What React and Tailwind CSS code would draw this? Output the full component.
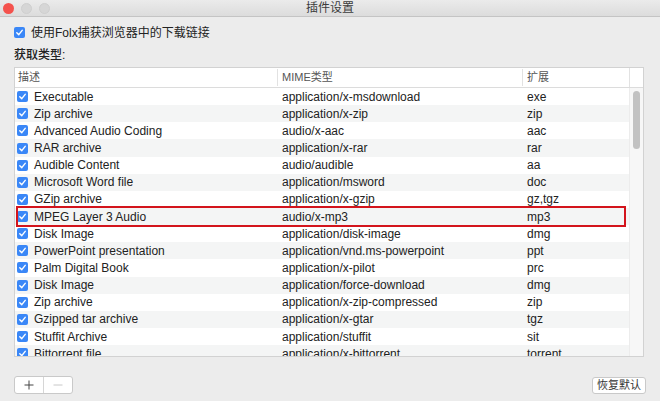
import React from 'react';

const rows = [
  ['Executable', 'application/x-msdownload', 'exe'],
  ['Zip archive', 'application/x-zip', 'zip'],
  ['Advanced Audio Coding', 'audio/x-aac', 'aac'],
  ['RAR archive', 'application/x-rar', 'rar'],
  ['Audible Content', 'audio/audible', 'aa'],
  ['Microsoft Word file', 'application/msword', 'doc'],
  ['GZip archive', 'application/x-gzip', 'gz,tgz'],
  ['MPEG Layer 3 Audio', 'audio/x-mp3', 'mp3'],
  ['Disk Image', 'application/disk-image', 'dmg'],
  ['PowerPoint presentation', 'application/vnd.ms-powerpoint', 'ppt'],
  ['Palm Digital Book', 'application/x-pilot', 'prc'],
  ['Disk Image', 'application/force-download', 'dmg'],
  ['Zip archive', 'application/x-zip-compressed', 'zip'],
  ['Gzipped tar archive', 'application/x-gtar', 'tgz'],
  ['Stuffit Archive', 'application/stuffit', 'sit'],
  ['Bittorrent file', 'application/x-bittorrent', 'torrent'],
];

const Check = () => (
  <span className="w-[11px] h-[11px] rounded-[2px] bg-[#3a87f7] flex items-center justify-center shrink-0">
    <svg width="9" height="9" viewBox="0 0 10 10" fill="none">
      <path d="M2 5.2 L4.2 7.4 L8 2.6" stroke="white" strokeWidth="1.6" strokeLinecap="round" strokeLinejoin="round" />
    </svg>
  </span>
);

export default function App() {
  return (
    <div
      className="w-[660px] h-[401px] bg-[#ececec] flex flex-col overflow-hidden text-[#222]"
      style={{ fontFamily: '"Liberation Sans", "Noto Sans CJK SC", sans-serif' }}
    >
      {/* title bar */}
      <div className="h-[17px] grid grid-cols-[1fr_auto_1fr] items-center bg-gradient-to-b from-[#ebebeb] to-[#dcdcdc] border-b border-[#c4c4c4] shrink-0">
        <div className="flex items-center gap-[7px] pl-[3px]">
          <span className="w-[11px] h-[11px] rounded-full bg-[#f4524d]" />
          <span className="w-[11px] h-[11px] rounded-full bg-[#d6d6d6] border border-[#cfcfcf]" />
          <span className="w-[11px] h-[11px] rounded-full bg-[#d6d6d6] border border-[#cfcfcf]" />
        </div>
        <div className="text-[12px] text-[#3c3c3c] leading-none">插件设置</div>
        <div />
      </div>

      <div className="flex flex-col px-[14px]">
        <div className="flex items-center gap-[6px] mt-[10px] h-[11px]">
          <Check />
          <span className="text-[12px] leading-none">使用Folx捕获浏览器中的下载链接</span>
        </div>
        <div className="mt-[11px] text-[12px] leading-none font-medium">获取类型:</div>

        {/* table */}
        <div className="mt-[6px] w-[630px] h-[290px] bg-white border border-[#d2d2d2] flex flex-col overflow-hidden relative">
          <div className="h-[20px] flex items-center text-[11px] text-[#555] border-b border-[#dcdcdc] shrink-0">
            <div className="w-[262px] pl-[3px]">描述</div>
            <div className="w-[245px] pl-[4px] border-l border-[#e2e2e2]">MIME类型</div>
            <div className="w-[107px] pl-[4px] border-l border-[#e2e2e2]">扩展</div>
            <div className="flex-1 h-full border-l border-[#e2e2e2]" />
          </div>
          <div className="flex flex-1 overflow-hidden">
            <div className="w-[614px] flex flex-col">
              {rows.map((r, i) => (
                <div
                  key={i}
                  className={`h-[17.15px] shrink-0 flex items-center text-[12px] ${i % 2 ? 'bg-[#f4f5f5]' : 'bg-white'}`}
                >
                  <div className="w-[262px] pl-[2px] flex items-center gap-[6px]">
                    <Check />
                    <span className="whitespace-nowrap">{r[0]}</span>
                  </div>
                  <div className="w-[245px] pl-[5px] whitespace-nowrap">{r[1]}</div>
                  <div className="w-[107px] pl-[5px] whitespace-nowrap">{r[2]}</div>
                </div>
              ))}
            </div>
            <div className="flex-1 bg-[#f7f7f7] border-l border-[#ececec] pt-[3px] flex justify-center">
              <div className="w-[7px] h-[58px] rounded-full bg-[#c2c2c2]" />
            </div>
          </div>
          {/* red highlight */}
          <div className="absolute left-[1px] top-[138px] w-[610px] h-[21px] border-2 border-[#d3141c] pointer-events-none" />
        </div>

        {/* bottom buttons */}
        <div className="mt-[18px] flex items-center justify-between">
          <div className="flex h-[18px] w-[59px] bg-white border border-[#c9c9c9] rounded-[3px] overflow-hidden">
            <div className="w-[29px] flex items-center justify-center border-r border-[#d6d6d6]">
              <svg width="10" height="10" viewBox="0 0 10 10">
                <path d="M5 0.5 V9.5 M0.5 5 H9.5" stroke="#444" strokeWidth="1" />
              </svg>
            </div>
            <div className="flex-1 flex items-center justify-center">
              <svg width="10" height="10" viewBox="0 0 10 10">
                <path d="M0.5 5 H9.5" stroke="#c8c8c8" strokeWidth="1" />
              </svg>
            </div>
          </div>
          <div className="h-[17px] w-[54px] bg-white border border-[#c9c9c9] rounded-[3px] flex items-center justify-center text-[11px] text-[#333] mt-[2px]">
            恢复默认
          </div>
        </div>
      </div>
    </div>
  );
}
